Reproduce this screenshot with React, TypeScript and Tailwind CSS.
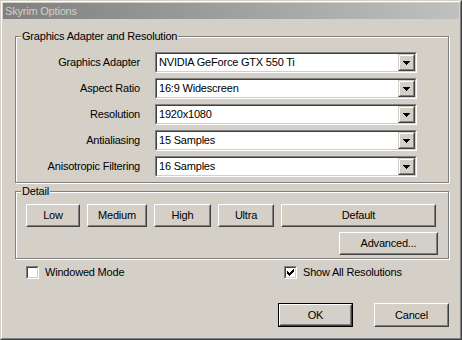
import React from "react";

const font = { fontFamily: '"Liberation Sans", Arial, sans-serif' };

function Arrow() {
  return (
    <svg width="7" height="4" viewBox="0 0 7 4" shapeRendering="crispEdges">
      <rect x="0" y="0" width="7" height="1" fill="#000" />
      <rect x="1" y="1" width="5" height="1" fill="#000" />
      <rect x="2" y="2" width="3" height="1" fill="#000" />
      <rect x="3" y="3" width="1" height="1" fill="#000" />
    </svg>
  );
}

function Combo({ value }: { value: string }) {
  return (
    <div className="w-[262px] h-[21px] border border-t-[#808080] border-l-[#808080] border-b-white border-r-white">
      <div className="h-full flex items-center bg-white border border-t-[#404040] border-l-[#404040] border-b-[#d4d0c8] border-r-[#d4d0c8]">
        <span className="flex-1 pl-[2px] leading-[13px] text-black whitespace-nowrap">{value}</span>
        <div className="w-[17px] h-[17px] border border-t-[#d4d0c8] border-l-[#d4d0c8] border-b-[#404040] border-r-[#404040]">
          <div className="w-full h-full flex items-center justify-center bg-[#d4d0c8] border border-t-white border-l-white border-b-[#808080] border-r-[#808080]">
            <Arrow />
          </div>
        </div>
      </div>
    </div>
  );
}

function Button({ label, w, h, isDefault }: { label: string; w: number; h: number; isDefault?: boolean }) {
  const inner = (
    <div className="w-full h-full border border-t-white border-l-white border-b-[#404040] border-r-[#404040]">
      <div className="w-full h-full flex items-center justify-center bg-[#d4d0c8] border border-t-[#d4d0c8] border-l-[#d4d0c8] border-b-[#808080] border-r-[#808080] leading-[13px] text-black">
        {label}
      </div>
    </div>
  );
  return (
    <div style={{ width: w, height: h }} className={isDefault ? "border border-black" : ""}>
      {inner}
    </div>
  );
}

function Check({ checked }: { checked?: boolean }) {
  return (
    <div className="w-[13px] h-[13px] border border-t-[#808080] border-l-[#808080] border-b-white border-r-white">
      <div className="w-full h-full bg-white border border-t-[#404040] border-l-[#404040] border-b-[#d4d0c8] border-r-[#d4d0c8] flex items-center justify-center">
        {checked && (
          <svg width="7" height="7" viewBox="0 0 7 7" shapeRendering="crispEdges">
            <rect x="0" y="2" width="1" height="3" fill="#000" />
            <rect x="1" y="3" width="1" height="3" fill="#000" />
            <rect x="2" y="4" width="1" height="3" fill="#000" />
            <rect x="3" y="3" width="1" height="3" fill="#000" />
            <rect x="4" y="2" width="1" height="3" fill="#000" />
            <rect x="5" y="1" width="1" height="3" fill="#000" />
            <rect x="6" y="0" width="1" height="3" fill="#000" />
          </svg>
        )}
      </div>
    </div>
  );
}

function Group({ title, className, children }: { title: string; className: string; children: React.ReactNode }) {
  return (
    <div className={`relative w-[434px] border border-[#808080] shadow-[inset_1px_1px_0_#fff,1px_1px_0_#fff] ${className}`}>
      <span className="absolute left-[5px] top-[-7px] px-[1px] bg-[#d4d0c8] leading-[13px] text-black">{title}</span>
      {children}
    </div>
  );
}

const rows: [string, string][] = [
  ["Graphics Adapter", "NVIDIA GeForce GTX 550 Ti"],
  ["Aspect Ratio", "16:9 Widescreen"],
  ["Resolution", "1920x1080"],
  ["Antialiasing", "15 Samples"],
  ["Anisotropic Filtering", "16 Samples"],
];

export default function App() {
  return (
    <div style={font} className="w-[462px] h-[340px] text-[11px] tracking-[-0.2px] bg-[#d4d0c8] border border-t-[#d4d0c8] border-l-[#d4d0c8] border-b-[#404040] border-r-[#404040]">
      <div className="w-full h-full border border-t-white border-l-white border-b-[#808080] border-r-[#808080] p-[1px] flex flex-col">
        <div className="h-[16px] flex items-center pl-[2px] bg-gradient-to-r from-[#808080] to-[#c0c0c0] text-[#d4d0c8] leading-[13px]">
          Skyrim Options
        </div>
        <div className="flex flex-col pl-[12px]">
          <Group title="Graphics Adapter and Resolution" className="mt-[17px] pt-[15px] pb-[5px]">
            <div className="flex flex-col gap-[5px]">
              {rows.map(([l, v]) => (
                <div key={l} className="flex items-center">
                  <div className="w-[124px] text-right leading-[13px] text-black whitespace-nowrap">{l}</div>
                  <div className="ml-[15px]">
                    <Combo value={v} />
                  </div>
                </div>
              ))}
            </div>
          </Group>
          <Group title="Detail" className="mt-[8px] pt-[12px] pb-[3px] pl-[10px]">
            <div className="flex gap-[7px]">
              <Button label="Low" w={54} h={23} />
              <Button label="Medium" w={60} h={23} />
              <Button label="High" w={57} h={23} />
              <Button label="Ultra" w={56} h={23} />
              <Button label="Default" w={155} h={23} />
            </div>
            <div className="flex justify-end pr-[10px] mt-[5px]">
              <Button label="Advanced..." w={99} h={23} />
            </div>
          </Group>
          <div className="flex items-center mt-[7px] h-[13px]">
            <div className="flex items-center gap-[6px] ml-[11px] w-[258px]">
              <Check />
              <span className="leading-[13px] text-black">Windowed Mode</span>
            </div>
            <div className="flex items-center gap-[6px]">
              <Check checked />
              <span className="leading-[13px] text-black">Show All Resolutions</span>
            </div>
          </div>
          <div className="flex justify-end gap-[21px] mt-[24px] pr-[10px]">
            <Button label="OK" w={75} h={24} isDefault />
            <Button label="Cancel" w={75} h={24} />
          </div>
        </div>
      </div>
    </div>
  );
}
